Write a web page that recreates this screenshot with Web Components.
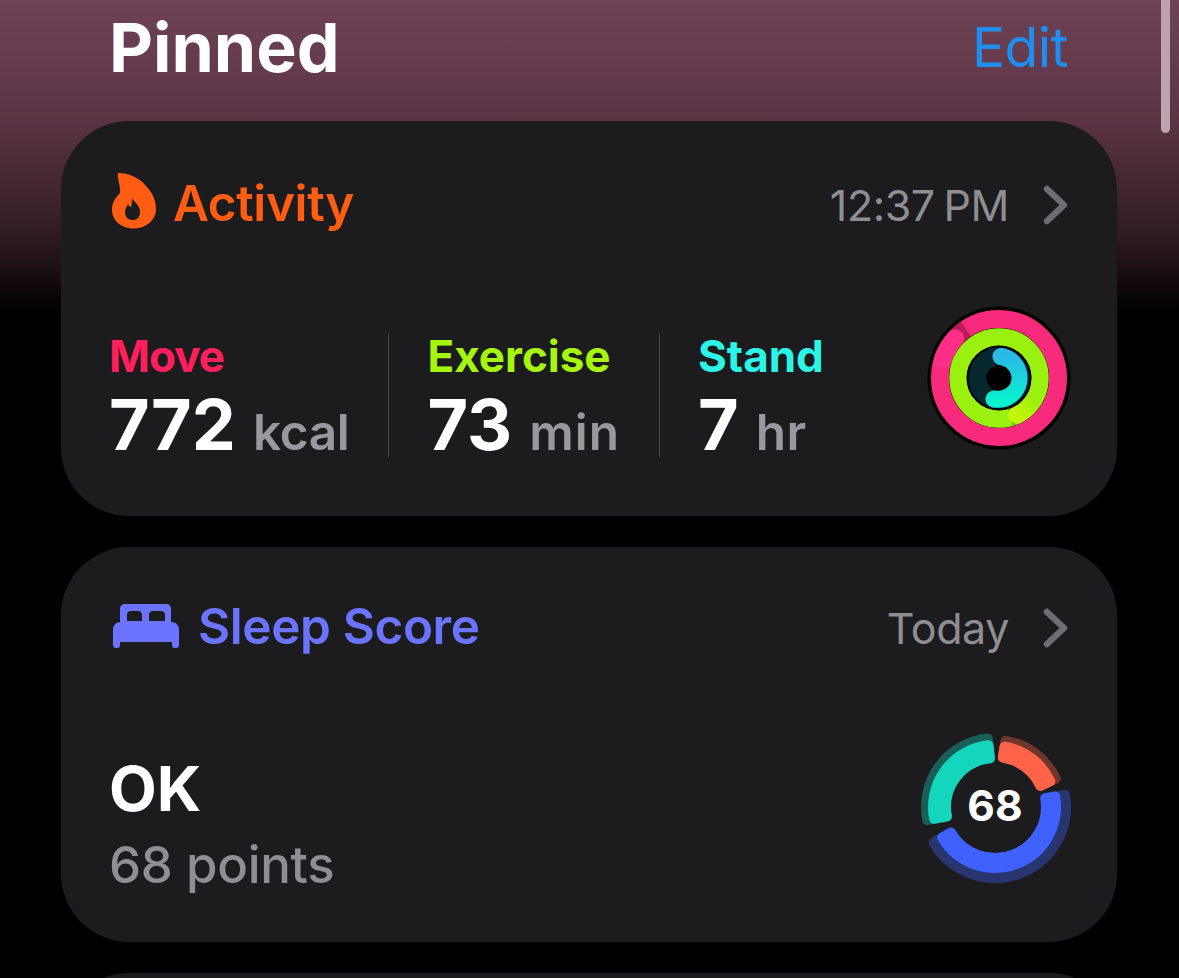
<!DOCTYPE html>
<html>
<head>
<meta charset="utf-8">
<title>Pinned</title>
<style>
    html, body { margin: 0; height: 978px; overflow: hidden; background: #000; }
    body { font-family: Inter, "Noto Sans", sans-serif; color: #fff; }
</style>
</head>
<body>
<health-screen>
    <pinned-header></pinned-header>
    <summary-card style="--accent:#ff5c14;--head-top:50px;--body-gap:67px" meta="12:37 PM">
        <svg slot="icon" width="44" height="56" viewBox="0 0 44 56" style="margin:0 -1px 8px 3px">
            <path fill="#ff5c14" fill-rule="evenodd" d="M6 0C16 0 27 4 34 13C41 20 44 28 44 36C44 47 34 55.500 21.500 55.500C9 55.500 0 47 0 37C0 30 3 25 8 20C9 14 5 6 6 0ZM20 25C22 29 28 32 28 39C28 44 25 47 21 47C16 47 13 44 13 39C13 36 15 33 16 31C17 33 18 34 19 34C20 31 20 28 20 25Z"/>
        </svg>
        <span slot="title">Activity</span>
        <activity-stat label="Move" value="772" unit="kcal" style="--tint:#ff1f5c;--label-spacing:-1px"></activity-stat>
        <activity-stat label="Exercise" value="73" unit="min" style="--tint:#a6f50f;--unit-spacing:1px"></activity-stat>
        <activity-stat label="Stand" value="7" unit="hr" last style="--tint:#2cf5e8;--unit-spacing:.5px"></activity-stat>
        <activity-rings slot="aside"></activity-rings>
    </summary-card>
    <summary-card style="--accent:#6a74ff;--head-top:47px;--body-gap:69px" meta="Today">
        <svg slot="icon" width="66" height="44" viewBox="0 0 66 44" style="margin:0 1px 4px 4px">
            <path fill="#6a74ff" fill-rule="evenodd" d="M12 0H53C56 0 58 2 58 5V18H7V5C7 2 9 0 12 0ZM18 7C15.500 7 14 8.500 14 11V17H29V11C29 8.500 27.500 7 25 7ZM40 7C37.500 7 36 8.500 36 11V17H52V11C52 8.500 50.500 7 48 7Z"/>
            <path fill="#6a74ff" d="M8 18H58C63 18 66 21 66 26V41C66 43 65 44 63 44H62C60 44 59 43 59 41V38H7V41C7 43 6 44 4 44H3C1 44 0 43 0 41V26C0 21 3 18 8 18Z"/>
        </svg>
        <span slot="title">Sleep Score</span>
        <sleep-summary rating="OK" points="68 points"></sleep-summary>
        <sleep-ring slot="aside" score="68"></sleep-ring>
    </summary-card>
    <summary-card></summary-card>
</health-screen>
<script>
class HealthScreen extends HTMLElement {
    constructor() {
        super();
        this.attachShadow({ mode: "open" });
        this.shadowRoot.innerHTML = `
            <style>
                :host {
                    display: flex;
                    flex-direction: column;
                    gap: 31px;
                    position: relative;
                    height: 978px;
                    padding: 0 62px 0 61px;
                    box-sizing: border-box;
                    overflow: hidden;
                    background: linear-gradient(#6f4256 0, #6c4053 20px, #5b3444 120px, #2d1a20 240px, #000 312px);
                }
                .scrollbar {
                    position: absolute;
                    top: -6px;
                    left: 1161px;
                    width: 9px;
                    height: 139px;
                    border-radius: 5px;
                    background: #bda3ae;
                }
            </style>
            <slot></slot>
            <div class="scrollbar"></div>
        `;
    }
}

class PinnedHeader extends HTMLElement {
    constructor() {
        super();
        this.attachShadow({ mode: "open" });
        this.shadowRoot.innerHTML = `
            <style>
                :host {
                    display: flex;
                    flex: none;
                    justify-content: space-between;
                    align-items: center;
                    height: 90px;
                    padding: 4px 49px 0 48px;
                    box-sizing: border-box;
                }
                h1 { margin: 0; font-size: 68px; font-weight: 700; }
                a { color: #1f8ef1; font-size: 55px; font-weight: 400; letter-spacing: -.5px; }
            </style>
            <h1>Pinned</h1>
            <a>Edit</a>
        `;
    }
}

class SummaryCard extends HTMLElement {
    constructor() {
        super();
        this.attachShadow({ mode: "open" });
        this.shadowRoot.innerHTML = `
            <style>
                :host {
                    display: flex;
                    flex-direction: column;
                    flex: none;
                    height: 395px;
                    padding: var(--head-top, 50px) 49px 0 48px;
                    box-sizing: border-box;
                    background: #1c1c1e;
                    border-radius: 68px;
                }
                .head {
                    display: flex;
                    align-items: center;
                    height: 68px;
                }
                .title {
                    display: flex;
                    align-items: center;
                    gap: 18px;
                    color: var(--accent);
                    font-size: 49.500px;
                    font-weight: 600;
                    letter-spacing: -.4px;
                }
                ::slotted(span) { margin-bottom: 4px; }
                .meta {
                    margin-left: auto;
                    color: #8e8e93;
                    font-size: 43px;
                    letter-spacing: -.4px;
                    word-spacing: -3px;
                }
                .chevron { margin-left: 34px; }
                .body {
                    display: flex;
                    align-items: flex-start;
                    margin-top: var(--body-gap, 67px);
                }
                .aside { margin-left: auto; display: flex; }
            </style>
            <div class="head">
                <div class="title"><slot name="icon"></slot><slot name="title"></slot></div>
                <div class="meta"></div>
                <svg class="chevron" width="25" height="40" viewBox="0 0 25 40">
                    <path d="M4 4L21 20L4 36" fill="none" stroke="#6e6e72" stroke-width="6.500" stroke-linecap="round" stroke-linejoin="round"/>
                </svg>
            </div>
            <div class="body">
                <slot></slot>
                <div class="aside"><slot name="aside"></slot></div>
            </div>
        `;
    }

    connectedCallback() {
        const meta = this.getAttribute("meta");
        if (!meta) {
            this.shadowRoot.querySelector(".head").style.display = "none";
            return;
        }
        this.shadowRoot.querySelector(".meta").textContent = meta;
    }
}

class ActivityStat extends HTMLElement {
    constructor() {
        super();
        this.attachShadow({ mode: "open" });
        this.shadowRoot.innerHTML = `
            <style>
                :host {
                    display: block;
                    padding-right: 39px;
                    margin: 28px 38px 0 0;
                    border-right: 1px solid #4a4a4d;
                    height: 123px;
                }
                :host([last]) { border-right: 0; padding-right: 0; margin-right: 0; }
                .label {
                    color: var(--tint);
                    font-size: 44px;
                    font-weight: 700;
                    line-height: 44px;
                    letter-spacing: var(--label-spacing, 0);
                }
                .row {
                    display: flex;
                    align-items: baseline;
                    gap: 17px;
                    margin-top: 13px;
                    line-height: 68px;
                    white-space: nowrap;
                }
                .value { font-size: 70px; font-weight: 700; }
                .unit { color: #98989e; font-size: 49.500px; font-weight: 600; letter-spacing: var(--unit-spacing, -.3px); }
            </style>
            <div class="label"></div>
            <div class="row"><span class="value"></span><span class="unit"></span></div>
        `;
    }

    connectedCallback() {
        this.shadowRoot.querySelector(".label").textContent = this.getAttribute("label");
        this.shadowRoot.querySelector(".value").textContent = this.getAttribute("value");
        this.shadowRoot.querySelector(".unit").textContent = this.getAttribute("unit");
    }
}

class SleepSummary extends HTMLElement {
    constructor() {
        super();
        this.attachShadow({ mode: "open" });
        this.shadowRoot.innerHTML = `
            <style>
                :host { display: block; margin-top: 23px; }
                .rating { font-size: 62px; font-weight: 700; line-height: 70px; }
                .points { margin-top: 11px; color: #8e8e93; font-size: 51px; font-weight: 500; line-height: 60px; letter-spacing: -.3px; }
            </style>
            <div class="rating"></div>
            <div class="points"></div>
        `;
    }

    connectedCallback() {
        this.shadowRoot.querySelector(".rating").textContent = this.getAttribute("rating");
        this.shadowRoot.querySelector(".points").textContent = this.getAttribute("points");
    }
}

class ActivityRings extends HTMLElement {
    constructor() {
        super();
        this.attachShadow({ mode: "open" });
        this.shadowRoot.innerHTML = `
            <style>
                :host { display: block; width: 144px; height: 144px; margin-right: -3px; }
            </style>
            <svg width="144" height="144" viewBox="-72 -72 144 144">
                <defs>
                    <linearGradient id="blue" x1="0" y1="0" x2="0" y2="1">
                        <stop offset="0" stop-color="#2bb9e6"/>
                        <stop offset="1" stop-color="#0af0d0"/>
                    </linearGradient>
                    <linearGradient id="lime" gradientUnits="userSpaceOnUse" x1="35" y1="20" x2="18" y2="37">
                        <stop offset="0" stop-color="#9af00f"/>
                        <stop offset="1" stop-color="#c4f50a"/>
                    </linearGradient>
                </defs>
                <circle r="71.500" fill="#000"/>
                <circle r="59" fill="none" stroke="#f82a7c" stroke-width="18"/>
                <path d="M-43.800 -39.500A59 59 0 0 1 -33 -48.900" fill="none" stroke="#b81c58" stroke-width="18"/>
                <path d="M-56 -18A59 59 0 0 1 -43.800 -39.500" fill="none" stroke="#ff2e88" stroke-width="18" stroke-linecap="round"/>
                <circle r="50" fill="#000"/>
                <circle r="41" fill="none" stroke="#9af00f" stroke-width="17.500"/>
                <path d="M18 36.900A41 41 0 0 1 11.300 39.400" fill="none" stroke="#72bd10" stroke-width="17.500"/>
                <path d="M35.500 20.500A41 41 0 0 1 18 36.900" fill="none" stroke="url(#lime)" stroke-width="17.500" stroke-linecap="round"/>
                <circle r="32.500" fill="#000"/>
                <circle r="21.500" fill="none" stroke="#06272e" stroke-width="18"/>
                <path d="M2 -21.500A21.500 21.500 0 1 1 -5 21" fill="none" stroke="url(#blue)" stroke-width="17" stroke-linecap="round"/>
                <circle r="12.500" fill="#000"/>
            </svg>
        `;
    }
}

class SleepRing extends HTMLElement {
    constructor() {
        super();
        this.attachShadow({ mode: "open" });
        const sector = (r0, r1, a0, a1) => {
            const pt = (r, a) => {
                const t = a * Math.PI / 180;
                return `${(r * Math.sin(t)).toFixed(2)} ${(-r * Math.cos(t)).toFixed(2)}`;
            };
            const large = a1 - a0 > 180 ? 1 : 0;
            return `M${pt(r1, a0)}A${r1} ${r1} 0 ${large} 1 ${pt(r1, a1)}L${pt(r0, a1)}A${r0} ${r0} 0 ${large} 0 ${pt(r0, a0)}Z`;
        };
        // inner, bright outer and dim outer edge differ per segment; corners come from a round stroke
        const segment = (color, inner, outer, dim, a0, a1) => `
            <g opacity=".36"><path d="${sector(inner + 5, dim - 5, a0, a1)}" fill="${color}" stroke="${color}" stroke-width="10" stroke-linejoin="round"/></g>
            <path d="${sector(inner + 5, outer - 5, a0, a1)}" fill="${color}" stroke="${color}" stroke-width="10" stroke-linejoin="round"/>
        `;
        this.shadowRoot.innerHTML = `
            <style>
                :host { display: block; position: relative; width: 152px; height: 152px; margin-right: -3px; }
                span {
                    position: absolute;
                    inset: 0 0 3px;
                    display: flex;
                    align-items: center;
                    justify-content: center;
                    font-size: 42.500px;
                    font-weight: 700;
                }
            </style>
            <svg width="152" height="152" viewBox="-76 -76 152 152">
                ${segment("#14d6bd", 44, 67, 74, 259, 354)}
                ${segment("#ff6448", 45, 66, 72, 9, 65)}
                ${segment("#3f62ff", 46, 66, 76, 80, 240)}
            </svg>
            <span></span>
        `;
    }

    connectedCallback() {
        this.shadowRoot.querySelector("span").textContent = this.getAttribute("score");
    }
}

customElements.define("health-screen", HealthScreen);
customElements.define("pinned-header", PinnedHeader);
customElements.define("summary-card", SummaryCard);
customElements.define("activity-stat", ActivityStat);
customElements.define("sleep-summary", SleepSummary);
customElements.define("activity-rings", ActivityRings);
customElements.define("sleep-ring", SleepRing);
</script>
</body>
</html>
